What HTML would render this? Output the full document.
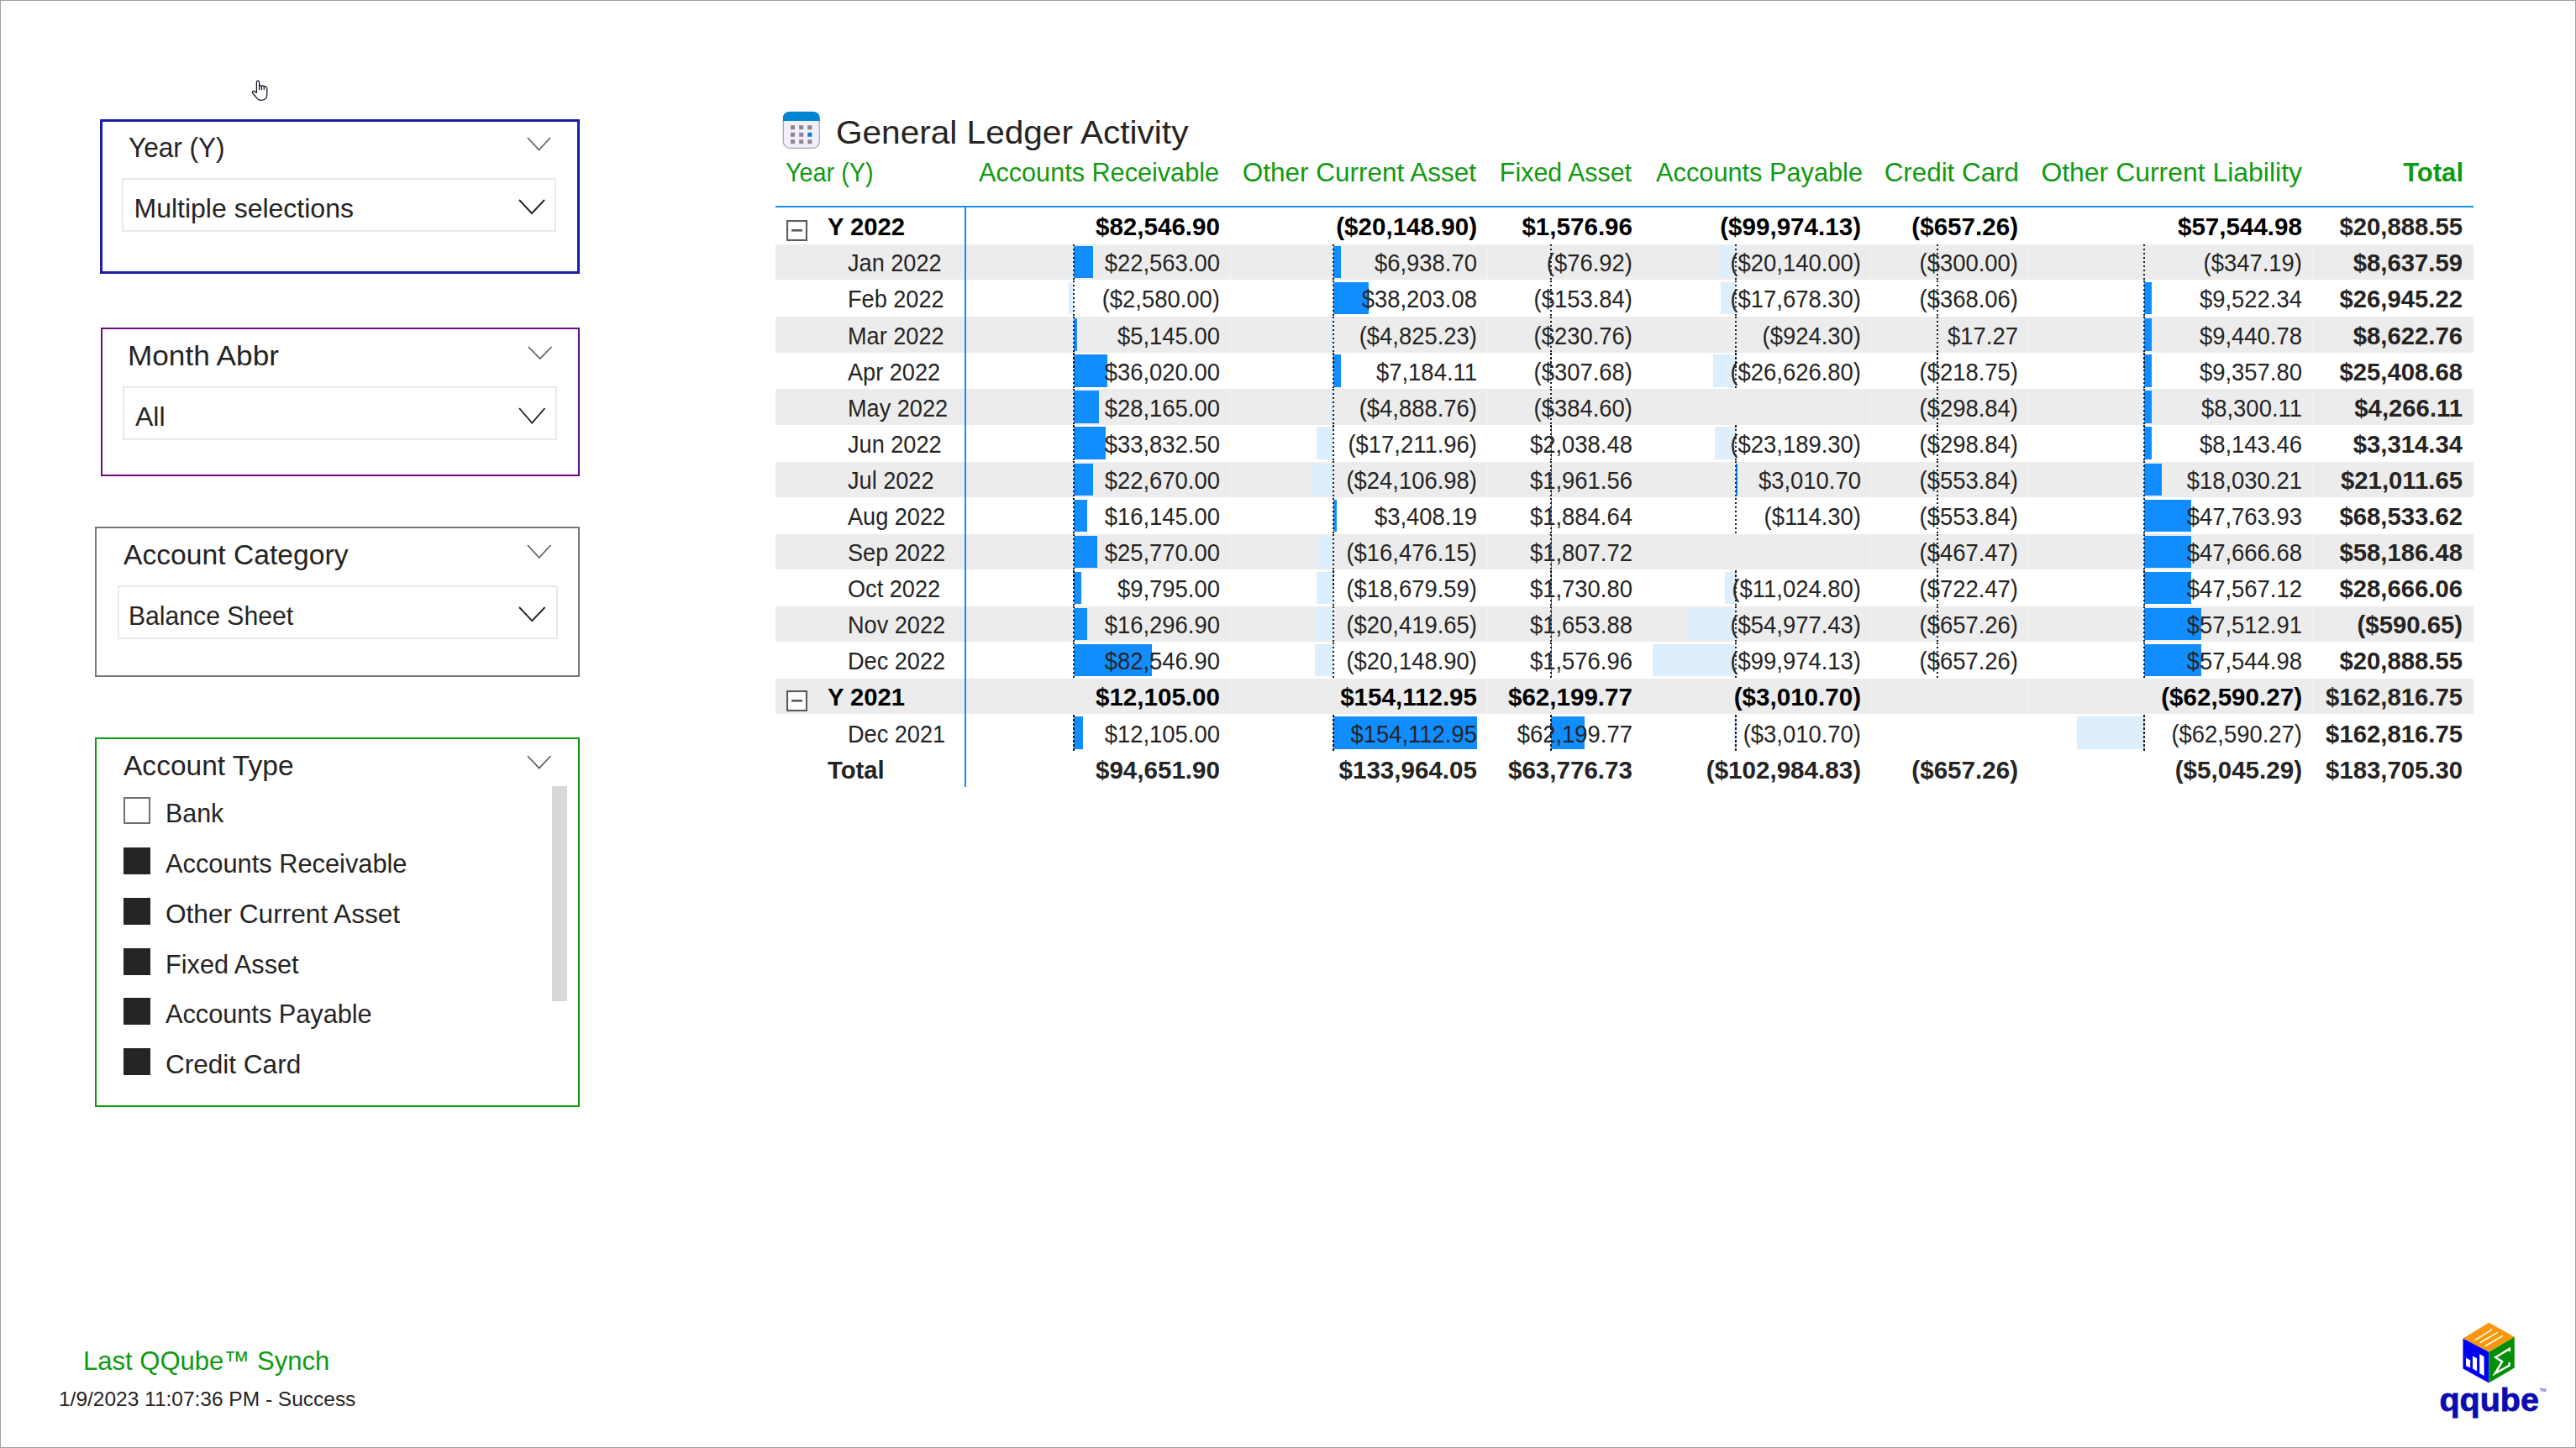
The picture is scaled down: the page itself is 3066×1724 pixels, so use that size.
<!DOCTYPE html>
<html><head><meta charset="utf-8"><style>
html,body{margin:0;padding:0;background:#fff;width:3066px;height:1724px;overflow:hidden}
body{position:relative;font-family:"Liberation Sans",sans-serif}
.t{position:absolute;white-space:pre}
.r{position:absolute}
.ax{width:2px;background:repeating-linear-gradient(to bottom,#1a1a1a 0,#1a1a1a 2.5px,transparent 2.5px,transparent 5px)}
</style></head><body>
<div class="r" style="left:0;top:0;width:3066px;height:1724px;box-sizing:border-box;border:1px solid #a0a0a0;border-right-width:1px;border-bottom-width:1px"></div>
<svg class="r" style="left:296px;top:95px" width="26" height="28" viewBox="0 0 26 28"><path d="M9.4 15.4 L9.4 2.8 Q9.4 1.2 11 1.2 Q12.6 1.2 12.6 2.8 L12.6 7.2 Q14 6.2 15.4 7.4 Q17 6.6 18.3 8 Q21.8 7.6 21.8 10.5 L21.8 18 Q21.5 24.4 14.4 24.4 Q11.5 24.4 9 21 L4.6 15.5 Q3.6 13.8 5.5 13.5 Q7 13.4 9.4 15.4 Z" fill="#fff" stroke="#141428" stroke-width="1.25" stroke-linejoin="round"/><path d="M12.6 7.2 L12.6 11.6 M15.4 7.4 L15.4 11.6 M18.3 8 L18.3 11.6" fill="none" stroke="#141428" stroke-width="1.25" stroke-linecap="round"/></svg>
<div class="r" style="left:119px;top:142px;width:571px;height:184px;box-sizing:border-box;border:3px solid #1a1ea6;"></div>
<div class="t" style="top:159.06px;font-size:33px;line-height:33px;color:#252423;left:153.00px;transform-origin:0 0;transform:scaleX(0.956);">Year (Y)</div>
<svg class="r" style="left:625px;top:161px" width="33" height="20.5"><polyline points="3,3 16.50,17.50 30.00,3" fill="none" stroke="#605e5c" stroke-width="1.7"/></svg>
<div class="r" style="left:145px;top:212px;width:517px;height:64px;box-sizing:border-box;border:2px solid #e9e9e9;"></div>
<div class="t" style="top:232.11px;font-size:32px;line-height:32px;color:#252423;left:159.50px;transform-origin:0 0;">Multiple selections</div>
<svg class="r" style="left:614.5px;top:235px" width="36.0" height="22"><polyline points="3,3 18.00,19.00 33.00,3" fill="none" stroke="#252423" stroke-width="1.9"/></svg>
<div class="r" style="left:120px;top:390px;width:570px;height:177px;box-sizing:border-box;border:2px solid #6b0a84;"></div>
<div class="t" style="top:407.26px;font-size:33px;line-height:33px;color:#252423;left:152.40px;transform-origin:0 0;transform:scaleX(1.066);">Month Abbr</div>
<svg class="r" style="left:626px;top:409.5px" width="33.5" height="20.0"><polyline points="3,3 16.75,17.00 30.50,3" fill="none" stroke="#605e5c" stroke-width="1.7"/></svg>
<div class="r" style="left:146px;top:459.5px;width:517px;height:64.5px;box-sizing:border-box;border:2px solid #e9e9e9;"></div>
<div class="t" style="top:479.71px;font-size:32px;line-height:32px;color:#252423;left:161.00px;transform-origin:0 0;">All</div>
<svg class="r" style="left:615px;top:482.5px" width="36.5" height="23.5"><polyline points="3,3 18.25,20.50 33.50,3" fill="none" stroke="#252423" stroke-width="1.9"/></svg>
<div class="r" style="left:113px;top:627px;width:577px;height:179px;box-sizing:border-box;border:2px solid #777777;"></div>
<div class="t" style="top:644.26px;font-size:33px;line-height:33px;color:#252423;left:147.00px;transform-origin:0 0;transform:scaleX(1.02);">Account Category</div>
<svg class="r" style="left:625px;top:646px" width="33.5" height="21"><polyline points="3,3 16.75,18.00 30.50,3" fill="none" stroke="#605e5c" stroke-width="1.7"/></svg>
<div class="r" style="left:139.5px;top:696.5px;width:524.5px;height:64.0px;box-sizing:border-box;border:2px solid #e9e9e9;"></div>
<div class="t" style="top:716.61px;font-size:32px;line-height:32px;color:#252423;left:153.00px;transform-origin:0 0;transform:scaleX(0.942);">Balance Sheet</div>
<svg class="r" style="left:615px;top:719.6px" width="36.60000000000002" height="22.100000000000023"><polyline points="3,3 18.30,19.10 33.60,3" fill="none" stroke="#252423" stroke-width="1.9"/></svg>
<div class="r" style="left:113px;top:878px;width:577px;height:440px;box-sizing:border-box;border:2px solid #0e9a0e;"></div>
<div class="t" style="top:894.86px;font-size:33px;line-height:33px;color:#252423;left:147.00px;transform-origin:0 0;transform:scaleX(1.016);">Account Type</div>
<svg class="r" style="left:625px;top:897px" width="33.5" height="20.700000000000045"><polyline points="3,3 16.75,17.70 30.50,3" fill="none" stroke="#605e5c" stroke-width="1.7"/></svg>
<div class="r" style="left:657.00px;top:936.00px;width:18.00px;height:256.00px;background:#d8d8d8;"></div>
<div class="r" style="left:147px;top:949px;width:32px;height:32px;box-sizing:border-box;border:2px solid #6f6f6f;background:#fff;"></div>
<div class="t" style="top:951.51px;font-size:32px;line-height:32px;color:#252423;left:197.20px;transform-origin:0 0;transform:scaleX(0.95);">Bank</div>
<div class="r" style="left:147.00px;top:1009.00px;width:32.00px;height:32.00px;background:#252423;"></div>
<div class="t" style="top:1011.51px;font-size:32px;line-height:32px;color:#252423;left:197.20px;transform-origin:0 0;transform:scaleX(0.962);">Accounts Receivable</div>
<div class="r" style="left:147.00px;top:1069.00px;width:32.00px;height:32.00px;background:#252423;"></div>
<div class="t" style="top:1071.51px;font-size:32px;line-height:32px;color:#252423;left:197.20px;transform-origin:0 0;transform:scaleX(0.987);">Other Current Asset</div>
<div class="r" style="left:147.00px;top:1129.00px;width:32.00px;height:32.00px;background:#252423;"></div>
<div class="t" style="top:1131.51px;font-size:32px;line-height:32px;color:#252423;left:197.20px;transform-origin:0 0;transform:scaleX(0.959);">Fixed Asset</div>
<div class="r" style="left:147.00px;top:1188.00px;width:32.00px;height:32.00px;background:#252423;"></div>
<div class="t" style="top:1190.51px;font-size:32px;line-height:32px;color:#252423;left:197.20px;transform-origin:0 0;transform:scaleX(0.959);">Accounts Payable</div>
<div class="r" style="left:147.00px;top:1248.00px;width:32.00px;height:32.00px;background:#252423;"></div>
<div class="t" style="top:1250.51px;font-size:32px;line-height:32px;color:#252423;left:197.20px;transform-origin:0 0;transform:scaleX(0.985);">Credit Card</div>
<div class="t" style="top:1603.91px;font-size:32px;line-height:32px;color:#119a11;left:99.00px;transform-origin:0 0;transform:scaleX(0.97);">Last QQube&trade; Synch</div>
<div class="t" style="top:1654.48px;font-size:24px;line-height:24px;color:#252423;left:70.00px;transform-origin:0 0;transform:scaleX(1.02);">1/9/2023 11:07:36 PM - Success</div>
<svg class="r" style="left:2890px;top:1565px" width="150" height="130" viewBox="2890 1565 150 130">
<polygon points="2962.3,1574.7 2992.8,1591.7 2962.3,1609.8 2931.5,1593.4" fill="#f7970c"/>
<polygon points="2931.5,1593.4 2962.3,1609.8 2962.3,1646.6 2931.5,1629.6" fill="#0000f0"/>
<polygon points="2962.3,1609.8 2992.8,1591.7 2992.8,1628.5 2962.3,1646.6" fill="#038f03"/>
<g stroke="#fff" stroke-width="1.5" stroke-linecap="round"><line x1="2945.8" y1="1595.7" x2="2965.7" y2="1583.2"/><line x1="2952.1" y1="1598.5" x2="2972.1" y2="1586.6"/><line x1="2958.3" y1="1602.5" x2="2978.7" y2="1590.4"/></g>
<g fill="#fff"><polygon points="2935,1616.6 2940.2,1619.5 2940.2,1628.5 2935,1626.3"/><polygon points="2943,1614.4 2948.1,1617.2 2948.1,1632.5 2943,1629.6"/><polygon points="2951.2,1612 2956.6,1615.2 2956.6,1638.1 2951.2,1635"/></g>
<path d="M2986.9,1609 L2986.9,1605.9 L2970.2,1616.1 L2978.1,1621.2 L2969.6,1635.3 L2986.6,1625.7 L2986.6,1622" fill="none" stroke="#fff" stroke-width="2.4" stroke-linejoin="miter"/>
<text x="2903.4" y="1680" font-family="Liberation Sans" font-weight="700" font-size="39" fill="#0c0cb0" stroke="#0c0cb0" stroke-width="0.8" textLength="118.6" lengthAdjust="spacingAndGlyphs">qqube</text>
<text x="3022.5" y="1656.8" font-family="Liberation Sans" font-size="5.5" fill="#0c0cb0">TM</text>
</svg>
<svg class="r" style="left:931px;top:132px" width="46" height="46" viewBox="931 132 46 46">
<rect x="932.3" y="133.4" width="43" height="43" rx="8" fill="#f3eff8" stroke="#a79fb0" stroke-width="1.2"/>
<path d="M932 144 L932 141 Q932 133 940 133 L967.6 133 Q975.6 133 975.6 141 L975.6 144 Z" fill="#0086d1"/>
<g fill="#8e8499"><rect x="941" y="149.2" width="5" height="5"/><rect x="951.2" y="149.2" width="5" height="5"/><rect x="961.3" y="149.2" width="5" height="5"/>
<rect x="941" y="157.8" width="5" height="5"/><rect x="951.2" y="157.8" width="5" height="5"/>
<rect x="941" y="166.2" width="5" height="5"/><rect x="951.2" y="166.2" width="5" height="5"/><rect x="961.3" y="166.2" width="5" height="5"/></g>
<rect x="961.3" y="157.8" width="5" height="5" fill="#0083d0"/>
</svg>
<div class="t" style="top:137.56px;font-size:39.5px;line-height:39.5px;color:#252423;left:994.50px;transform-origin:0 0;transform:scaleX(1.027);">General Ledger Activity</div>
<div class="t" style="top:188.91px;font-size:32px;line-height:32px;color:#119a11;left:934.50px;transform-origin:0 0;transform:scaleX(0.9);">Year (Y)</div>
<div class="t" style="top:188.91px;font-size:32px;line-height:32px;color:#119a11;left:-48.60px;width:1500px;text-align:right;transform-origin:100% 0;transform:scaleX(0.957);">Accounts Receivable</div>
<div class="t" style="top:188.91px;font-size:32px;line-height:32px;color:#119a11;left:257.40px;width:1500px;text-align:right;transform-origin:100% 0;transform:scaleX(0.984);">Other Current Asset</div>
<div class="t" style="top:188.91px;font-size:32px;line-height:32px;color:#119a11;left:442.00px;width:1500px;text-align:right;transform-origin:100% 0;transform:scaleX(0.95);">Fixed Asset</div>
<div class="t" style="top:188.91px;font-size:32px;line-height:32px;color:#119a11;left:717.00px;width:1500px;text-align:right;transform-origin:100% 0;transform:scaleX(0.96);">Accounts Payable</div>
<div class="t" style="top:188.91px;font-size:32px;line-height:32px;color:#119a11;left:903.40px;width:1500px;text-align:right;transform-origin:100% 0;transform:scaleX(0.98);">Credit Card</div>
<div class="t" style="top:188.91px;font-size:32px;line-height:32px;color:#119a11;left:1239.60px;width:1500px;text-align:right;transform-origin:100% 0;transform:scaleX(0.998);">Other Current Liability</div>
<div class="t" style="top:188.91px;font-size:32px;line-height:32px;color:#119a11;font-weight:700;left:1432.20px;width:1500px;text-align:right;transform-origin:100% 0;transform:scaleX(0.97);">Total</div>
<div class="r" style="left:922.80px;top:291.09px;width:2021.00px;height:42.30px;background:#ececec;"></div>
<div class="r" style="left:922.80px;top:377.27px;width:2021.00px;height:42.30px;background:#ececec;"></div>
<div class="r" style="left:922.80px;top:463.45px;width:2021.00px;height:42.30px;background:#ececec;"></div>
<div class="r" style="left:922.80px;top:549.63px;width:2021.00px;height:42.30px;background:#ececec;"></div>
<div class="r" style="left:922.80px;top:635.81px;width:2021.00px;height:42.30px;background:#ececec;"></div>
<div class="r" style="left:922.80px;top:721.99px;width:2021.00px;height:42.30px;background:#ececec;"></div>
<div class="r" style="left:922.80px;top:808.17px;width:2021.00px;height:42.30px;background:#ececec;"></div>
<div class="r" style="left:1463.90px;top:291.09px;width:1.00px;height:42.30px;background:#f3f3f3;"></div>
<div class="r" style="left:1463.90px;top:377.27px;width:1.00px;height:42.30px;background:#f3f3f3;"></div>
<div class="r" style="left:1463.90px;top:463.45px;width:1.00px;height:42.30px;background:#f3f3f3;"></div>
<div class="r" style="left:1463.90px;top:549.63px;width:1.00px;height:42.30px;background:#f3f3f3;"></div>
<div class="r" style="left:1463.90px;top:635.81px;width:1.00px;height:42.30px;background:#f3f3f3;"></div>
<div class="r" style="left:1463.90px;top:721.99px;width:1.00px;height:42.30px;background:#f3f3f3;"></div>
<div class="r" style="left:1463.90px;top:808.17px;width:1.00px;height:42.30px;background:#f3f3f3;"></div>
<div class="r" style="left:1769.80px;top:291.09px;width:1.00px;height:42.30px;background:#f3f3f3;"></div>
<div class="r" style="left:1769.80px;top:377.27px;width:1.00px;height:42.30px;background:#f3f3f3;"></div>
<div class="r" style="left:1769.80px;top:463.45px;width:1.00px;height:42.30px;background:#f3f3f3;"></div>
<div class="r" style="left:1769.80px;top:549.63px;width:1.00px;height:42.30px;background:#f3f3f3;"></div>
<div class="r" style="left:1769.80px;top:635.81px;width:1.00px;height:42.30px;background:#f3f3f3;"></div>
<div class="r" style="left:1769.80px;top:721.99px;width:1.00px;height:42.30px;background:#f3f3f3;"></div>
<div class="r" style="left:1769.80px;top:808.17px;width:1.00px;height:42.30px;background:#f3f3f3;"></div>
<div class="r" style="left:2226.10px;top:291.09px;width:1.00px;height:42.30px;background:#f3f3f3;"></div>
<div class="r" style="left:2226.10px;top:377.27px;width:1.00px;height:42.30px;background:#f3f3f3;"></div>
<div class="r" style="left:2226.10px;top:463.45px;width:1.00px;height:42.30px;background:#f3f3f3;"></div>
<div class="r" style="left:2226.10px;top:549.63px;width:1.00px;height:42.30px;background:#f3f3f3;"></div>
<div class="r" style="left:2226.10px;top:635.81px;width:1.00px;height:42.30px;background:#f3f3f3;"></div>
<div class="r" style="left:2226.10px;top:721.99px;width:1.00px;height:42.30px;background:#f3f3f3;"></div>
<div class="r" style="left:2226.10px;top:808.17px;width:1.00px;height:42.30px;background:#f3f3f3;"></div>
<div class="r" style="left:2414.00px;top:291.09px;width:1.00px;height:42.30px;background:#f3f3f3;"></div>
<div class="r" style="left:2414.00px;top:377.27px;width:1.00px;height:42.30px;background:#f3f3f3;"></div>
<div class="r" style="left:2414.00px;top:463.45px;width:1.00px;height:42.30px;background:#f3f3f3;"></div>
<div class="r" style="left:2414.00px;top:549.63px;width:1.00px;height:42.30px;background:#f3f3f3;"></div>
<div class="r" style="left:2414.00px;top:635.81px;width:1.00px;height:42.30px;background:#f3f3f3;"></div>
<div class="r" style="left:2414.00px;top:721.99px;width:1.00px;height:42.30px;background:#f3f3f3;"></div>
<div class="r" style="left:2414.00px;top:808.17px;width:1.00px;height:42.30px;background:#f3f3f3;"></div>
<div class="r" style="left:2751.80px;top:291.09px;width:1.00px;height:42.30px;background:#f3f3f3;"></div>
<div class="r" style="left:2751.80px;top:377.27px;width:1.00px;height:42.30px;background:#f3f3f3;"></div>
<div class="r" style="left:2751.80px;top:463.45px;width:1.00px;height:42.30px;background:#f3f3f3;"></div>
<div class="r" style="left:2751.80px;top:549.63px;width:1.00px;height:42.30px;background:#f3f3f3;"></div>
<div class="r" style="left:2751.80px;top:635.81px;width:1.00px;height:42.30px;background:#f3f3f3;"></div>
<div class="r" style="left:2751.80px;top:721.99px;width:1.00px;height:42.30px;background:#f3f3f3;"></div>
<div class="r" style="left:2751.80px;top:808.17px;width:1.00px;height:42.30px;background:#f3f3f3;"></div>
<div class="r" style="left:922.80px;top:245.00px;width:2021.00px;height:2.40px;background:#118dff;"></div>
<div class="r" style="left:1148.00px;top:247.00px;width:2.30px;height:689.50px;background:#118dff;"></div>
<div class="r" style="left:1278.00px;top:292.99px;width:23.10px;height:38.40px;background:#118dff;"></div>
<div class="r" style="left:1272.40px;top:336.08px;width:5.60px;height:38.40px;background:#ddeefd;"></div>
<div class="r" style="left:1278.00px;top:379.17px;width:4.00px;height:38.40px;background:#118dff;"></div>
<div class="r" style="left:1278.00px;top:422.26px;width:39.70px;height:38.40px;background:#118dff;"></div>
<div class="r" style="left:1278.00px;top:465.35px;width:30.40px;height:38.40px;background:#118dff;"></div>
<div class="r" style="left:1278.00px;top:508.44px;width:37.50px;height:38.40px;background:#118dff;"></div>
<div class="r" style="left:1278.00px;top:551.53px;width:23.20px;height:38.40px;background:#118dff;"></div>
<div class="r" style="left:1278.00px;top:594.62px;width:16.00px;height:38.40px;background:#118dff;"></div>
<div class="r" style="left:1278.00px;top:637.71px;width:27.90px;height:38.40px;background:#118dff;"></div>
<div class="r" style="left:1278.00px;top:680.80px;width:8.50px;height:38.40px;background:#118dff;"></div>
<div class="r" style="left:1278.00px;top:723.89px;width:16.00px;height:38.40px;background:#118dff;"></div>
<div class="r" style="left:1278.00px;top:766.98px;width:92.50px;height:38.40px;background:#118dff;"></div>
<div class="r" style="left:1278.00px;top:853.16px;width:11.30px;height:38.40px;background:#118dff;"></div>
<div class="r ax" style="left:1277.00px;top:290.89px;height:43.09px"></div>
<div class="r ax" style="left:1277.00px;top:333.98px;height:43.09px"></div>
<div class="r ax" style="left:1277.00px;top:377.07px;height:43.09px"></div>
<div class="r ax" style="left:1277.00px;top:420.16px;height:43.09px"></div>
<div class="r ax" style="left:1277.00px;top:463.25px;height:43.09px"></div>
<div class="r ax" style="left:1277.00px;top:506.34px;height:43.09px"></div>
<div class="r ax" style="left:1277.00px;top:549.43px;height:43.09px"></div>
<div class="r ax" style="left:1277.00px;top:592.52px;height:43.09px"></div>
<div class="r ax" style="left:1277.00px;top:635.61px;height:43.09px"></div>
<div class="r ax" style="left:1277.00px;top:678.70px;height:43.09px"></div>
<div class="r ax" style="left:1277.00px;top:721.79px;height:43.09px"></div>
<div class="r ax" style="left:1277.00px;top:764.88px;height:43.09px"></div>
<div class="r ax" style="left:1277.00px;top:851.06px;height:43.09px"></div>
<div class="r" style="left:1587.00px;top:292.99px;width:8.90px;height:38.40px;background:#118dff;"></div>
<div class="r" style="left:1587.00px;top:336.08px;width:42.00px;height:38.40px;background:#118dff;"></div>
<div class="r" style="left:1581.50px;top:379.17px;width:5.50px;height:38.40px;background:#ddeefd;"></div>
<div class="r" style="left:1587.00px;top:422.26px;width:8.90px;height:38.40px;background:#118dff;"></div>
<div class="r" style="left:1581.50px;top:465.35px;width:5.50px;height:38.40px;background:#ddeefd;"></div>
<div class="r" style="left:1567.20px;top:508.44px;width:19.80px;height:38.40px;background:#ddeefd;"></div>
<div class="r" style="left:1560.00px;top:551.53px;width:27.00px;height:38.40px;background:#ddeefd;"></div>
<div class="r" style="left:1587.00px;top:594.62px;width:3.70px;height:38.40px;background:#118dff;"></div>
<div class="r" style="left:1569.10px;top:637.71px;width:17.90px;height:38.40px;background:#ddeefd;"></div>
<div class="r" style="left:1566.90px;top:680.80px;width:20.10px;height:38.40px;background:#ddeefd;"></div>
<div class="r" style="left:1565.00px;top:723.89px;width:22.00px;height:38.40px;background:#ddeefd;"></div>
<div class="r" style="left:1565.00px;top:766.98px;width:22.00px;height:38.40px;background:#ddeefd;"></div>
<div class="r" style="left:1587.00px;top:853.16px;width:171.40px;height:38.40px;background:#118dff;"></div>
<div class="r ax" style="left:1586.00px;top:290.89px;height:43.09px"></div>
<div class="r ax" style="left:1586.00px;top:333.98px;height:43.09px"></div>
<div class="r ax" style="left:1586.00px;top:377.07px;height:43.09px"></div>
<div class="r ax" style="left:1586.00px;top:420.16px;height:43.09px"></div>
<div class="r ax" style="left:1586.00px;top:463.25px;height:43.09px"></div>
<div class="r ax" style="left:1586.00px;top:506.34px;height:43.09px"></div>
<div class="r ax" style="left:1586.00px;top:549.43px;height:43.09px"></div>
<div class="r ax" style="left:1586.00px;top:592.52px;height:43.09px"></div>
<div class="r ax" style="left:1586.00px;top:635.61px;height:43.09px"></div>
<div class="r ax" style="left:1586.00px;top:678.70px;height:43.09px"></div>
<div class="r ax" style="left:1586.00px;top:721.79px;height:43.09px"></div>
<div class="r ax" style="left:1586.00px;top:764.88px;height:43.09px"></div>
<div class="r ax" style="left:1586.00px;top:851.06px;height:43.09px"></div>
<div class="r" style="left:1845.50px;top:508.44px;width:1.30px;height:38.40px;background:#118dff;"></div>
<div class="r" style="left:1845.50px;top:551.53px;width:1.30px;height:38.40px;background:#118dff;"></div>
<div class="r" style="left:1845.50px;top:594.62px;width:1.30px;height:38.40px;background:#118dff;"></div>
<div class="r" style="left:1845.50px;top:637.71px;width:1.30px;height:38.40px;background:#118dff;"></div>
<div class="r" style="left:1845.50px;top:680.80px;width:1.30px;height:38.40px;background:#118dff;"></div>
<div class="r" style="left:1845.50px;top:723.89px;width:1.30px;height:38.40px;background:#118dff;"></div>
<div class="r" style="left:1845.50px;top:766.98px;width:1.30px;height:38.40px;background:#118dff;"></div>
<div class="r" style="left:1845.50px;top:853.16px;width:40.20px;height:38.40px;background:#118dff;"></div>
<div class="r ax" style="left:1844.50px;top:290.89px;height:43.09px"></div>
<div class="r ax" style="left:1844.50px;top:333.98px;height:43.09px"></div>
<div class="r ax" style="left:1844.50px;top:377.07px;height:43.09px"></div>
<div class="r ax" style="left:1844.50px;top:420.16px;height:43.09px"></div>
<div class="r ax" style="left:1844.50px;top:463.25px;height:43.09px"></div>
<div class="r ax" style="left:1844.50px;top:506.34px;height:43.09px"></div>
<div class="r ax" style="left:1844.50px;top:549.43px;height:43.09px"></div>
<div class="r ax" style="left:1844.50px;top:592.52px;height:43.09px"></div>
<div class="r ax" style="left:1844.50px;top:635.61px;height:43.09px"></div>
<div class="r ax" style="left:1844.50px;top:678.70px;height:43.09px"></div>
<div class="r ax" style="left:1844.50px;top:721.79px;height:43.09px"></div>
<div class="r ax" style="left:1844.50px;top:764.88px;height:43.09px"></div>
<div class="r ax" style="left:1844.50px;top:851.06px;height:43.09px"></div>
<div class="r" style="left:2046.10px;top:292.99px;width:19.90px;height:38.40px;background:#ddeefd;"></div>
<div class="r" style="left:2048.30px;top:336.08px;width:17.70px;height:38.40px;background:#ddeefd;"></div>
<div class="r" style="left:2039.10px;top:422.26px;width:26.90px;height:38.40px;background:#ddeefd;"></div>
<div class="r" style="left:2041.00px;top:508.44px;width:25.00px;height:38.40px;background:#ddeefd;"></div>
<div class="r" style="left:2066.00px;top:551.53px;width:1.60px;height:38.40px;background:#118dff;"></div>
<div class="r" style="left:2053.00px;top:680.80px;width:13.00px;height:38.40px;background:#ddeefd;"></div>
<div class="r" style="left:2009.90px;top:723.89px;width:56.10px;height:38.40px;background:#ddeefd;"></div>
<div class="r" style="left:1967.10px;top:766.98px;width:98.90px;height:38.40px;background:#ddeefd;"></div>
<div class="r" style="left:2063.80px;top:853.16px;width:2.20px;height:38.40px;background:#ddeefd;"></div>
<div class="r ax" style="left:2065.00px;top:290.89px;height:43.09px"></div>
<div class="r ax" style="left:2065.00px;top:333.98px;height:43.09px"></div>
<div class="r ax" style="left:2065.00px;top:377.07px;height:43.09px"></div>
<div class="r ax" style="left:2065.00px;top:420.16px;height:43.09px"></div>
<div class="r ax" style="left:2065.00px;top:506.34px;height:43.09px"></div>
<div class="r ax" style="left:2065.00px;top:549.43px;height:43.09px"></div>
<div class="r ax" style="left:2065.00px;top:592.52px;height:43.09px"></div>
<div class="r ax" style="left:2065.00px;top:678.70px;height:43.09px"></div>
<div class="r ax" style="left:2065.00px;top:721.79px;height:43.09px"></div>
<div class="r ax" style="left:2065.00px;top:764.88px;height:43.09px"></div>
<div class="r ax" style="left:2065.00px;top:851.06px;height:43.09px"></div>
<div class="r ax" style="left:2304.50px;top:290.89px;height:43.09px"></div>
<div class="r ax" style="left:2304.50px;top:333.98px;height:43.09px"></div>
<div class="r ax" style="left:2304.50px;top:377.07px;height:43.09px"></div>
<div class="r ax" style="left:2304.50px;top:420.16px;height:43.09px"></div>
<div class="r ax" style="left:2304.50px;top:463.25px;height:43.09px"></div>
<div class="r ax" style="left:2304.50px;top:506.34px;height:43.09px"></div>
<div class="r ax" style="left:2304.50px;top:549.43px;height:43.09px"></div>
<div class="r ax" style="left:2304.50px;top:592.52px;height:43.09px"></div>
<div class="r ax" style="left:2304.50px;top:635.61px;height:43.09px"></div>
<div class="r ax" style="left:2304.50px;top:678.70px;height:43.09px"></div>
<div class="r ax" style="left:2304.50px;top:721.79px;height:43.09px"></div>
<div class="r ax" style="left:2304.50px;top:764.88px;height:43.09px"></div>
<div class="r" style="left:2552.20px;top:336.08px;width:8.70px;height:38.40px;background:#118dff;"></div>
<div class="r" style="left:2552.20px;top:379.17px;width:8.70px;height:38.40px;background:#118dff;"></div>
<div class="r" style="left:2552.20px;top:422.26px;width:8.70px;height:38.40px;background:#118dff;"></div>
<div class="r" style="left:2552.20px;top:465.35px;width:8.70px;height:38.40px;background:#118dff;"></div>
<div class="r" style="left:2552.20px;top:508.44px;width:8.70px;height:38.40px;background:#118dff;"></div>
<div class="r" style="left:2552.20px;top:551.53px;width:20.80px;height:38.40px;background:#118dff;"></div>
<div class="r" style="left:2552.20px;top:594.62px;width:56.10px;height:38.40px;background:#118dff;"></div>
<div class="r" style="left:2552.20px;top:637.71px;width:56.10px;height:38.40px;background:#118dff;"></div>
<div class="r" style="left:2552.20px;top:680.80px;width:56.10px;height:38.40px;background:#118dff;"></div>
<div class="r" style="left:2552.20px;top:723.89px;width:68.30px;height:38.40px;background:#118dff;"></div>
<div class="r" style="left:2552.20px;top:766.98px;width:68.30px;height:38.40px;background:#118dff;"></div>
<div class="r" style="left:2472.20px;top:853.16px;width:80.00px;height:38.40px;background:#ddeefd;"></div>
<div class="r ax" style="left:2551.20px;top:290.89px;height:43.09px"></div>
<div class="r ax" style="left:2551.20px;top:333.98px;height:43.09px"></div>
<div class="r ax" style="left:2551.20px;top:377.07px;height:43.09px"></div>
<div class="r ax" style="left:2551.20px;top:420.16px;height:43.09px"></div>
<div class="r ax" style="left:2551.20px;top:463.25px;height:43.09px"></div>
<div class="r ax" style="left:2551.20px;top:506.34px;height:43.09px"></div>
<div class="r ax" style="left:2551.20px;top:549.43px;height:43.09px"></div>
<div class="r ax" style="left:2551.20px;top:592.52px;height:43.09px"></div>
<div class="r ax" style="left:2551.20px;top:635.61px;height:43.09px"></div>
<div class="r ax" style="left:2551.20px;top:678.70px;height:43.09px"></div>
<div class="r ax" style="left:2551.20px;top:721.79px;height:43.09px"></div>
<div class="r ax" style="left:2551.20px;top:764.88px;height:43.09px"></div>
<div class="r ax" style="left:2551.20px;top:851.06px;height:43.09px"></div>
<svg class="r" style="left:936px;top:262.30px" width="25" height="25"><rect x="1" y="1" width="23" height="23" fill="#fff" stroke="#5a5a5a" stroke-width="2.2"/><rect x="6" y="11" width="13" height="2.6" fill="#5a5a5a"/></svg>
<div class="t" style="top:256.25px;font-size:29px;line-height:29px;color:#000;font-weight:700;left:984.50px;transform-origin:0 0;transform:scaleX(1.007);">Y 2022</div>
<div class="t" style="top:256.25px;font-size:29px;line-height:29px;color:#000;font-weight:700;left:-48.00px;width:1500px;text-align:right;transform-origin:100% 0;transform:scaleX(1.02);">$82,546.90</div>
<div class="t" style="top:256.25px;font-size:29px;line-height:29px;color:#000;font-weight:700;left:257.90px;width:1500px;text-align:right;transform-origin:100% 0;transform:scaleX(1.02);">($20,148.90)</div>
<div class="t" style="top:256.25px;font-size:29px;line-height:29px;color:#000;font-weight:700;left:442.50px;width:1500px;text-align:right;transform-origin:100% 0;transform:scaleX(1.02);">$1,576.96</div>
<div class="t" style="top:256.25px;font-size:29px;line-height:29px;color:#000;font-weight:700;left:714.90px;width:1500px;text-align:right;transform-origin:100% 0;transform:scaleX(1.02);">($99,974.13)</div>
<div class="t" style="top:256.25px;font-size:29px;line-height:29px;color:#000;font-weight:700;left:901.70px;width:1500px;text-align:right;transform-origin:100% 0;transform:scaleX(1.02);">($657.26)</div>
<div class="t" style="top:256.25px;font-size:29px;line-height:29px;color:#000;font-weight:700;left:1240.10px;width:1500px;text-align:right;transform-origin:100% 0;transform:scaleX(1.02);">$57,544.98</div>
<div class="t" style="top:256.25px;font-size:29px;line-height:29px;color:#252423;font-weight:700;left:1431.00px;width:1500px;text-align:right;transform-origin:100% 0;transform:scaleX(1.01);">$20,888.55</div>
<div class="t" style="top:299.34px;font-size:29px;line-height:29px;color:#252423;left:1009.00px;transform-origin:0 0;transform:scaleX(0.935);">Jan 2022</div>
<div class="t" style="top:299.34px;font-size:29px;line-height:29px;color:#252423;left:-48.00px;width:1500px;text-align:right;transform-origin:100% 0;transform:scaleX(0.946);">$22,563.00</div>
<div class="t" style="top:299.34px;font-size:29px;line-height:29px;color:#252423;left:257.90px;width:1500px;text-align:right;transform-origin:100% 0;transform:scaleX(0.946);">$6,938.70</div>
<div class="t" style="top:299.34px;font-size:29px;line-height:29px;color:#252423;left:442.50px;width:1500px;text-align:right;transform-origin:100% 0;transform:scaleX(0.946);">($76.92)</div>
<div class="t" style="top:299.34px;font-size:29px;line-height:29px;color:#252423;left:714.90px;width:1500px;text-align:right;transform-origin:100% 0;transform:scaleX(0.946);">($20,140.00)</div>
<div class="t" style="top:299.34px;font-size:29px;line-height:29px;color:#252423;left:901.70px;width:1500px;text-align:right;transform-origin:100% 0;transform:scaleX(0.946);">($300.00)</div>
<div class="t" style="top:299.34px;font-size:29px;line-height:29px;color:#252423;left:1240.10px;width:1500px;text-align:right;transform-origin:100% 0;transform:scaleX(0.946);">($347.19)</div>
<div class="t" style="top:299.34px;font-size:29px;line-height:29px;color:#252423;font-weight:700;left:1431.00px;width:1500px;text-align:right;transform-origin:100% 0;transform:scaleX(1.01);">$8,637.59</div>
<div class="t" style="top:342.43px;font-size:29px;line-height:29px;color:#252423;left:1009.00px;transform-origin:0 0;transform:scaleX(0.935);">Feb 2022</div>
<div class="t" style="top:342.43px;font-size:29px;line-height:29px;color:#252423;left:-48.00px;width:1500px;text-align:right;transform-origin:100% 0;transform:scaleX(0.946);">($2,580.00)</div>
<div class="t" style="top:342.43px;font-size:29px;line-height:29px;color:#252423;left:257.90px;width:1500px;text-align:right;transform-origin:100% 0;transform:scaleX(0.946);">$38,203.08</div>
<div class="t" style="top:342.43px;font-size:29px;line-height:29px;color:#252423;left:442.50px;width:1500px;text-align:right;transform-origin:100% 0;transform:scaleX(0.946);">($153.84)</div>
<div class="t" style="top:342.43px;font-size:29px;line-height:29px;color:#252423;left:714.90px;width:1500px;text-align:right;transform-origin:100% 0;transform:scaleX(0.946);">($17,678.30)</div>
<div class="t" style="top:342.43px;font-size:29px;line-height:29px;color:#252423;left:901.70px;width:1500px;text-align:right;transform-origin:100% 0;transform:scaleX(0.946);">($368.06)</div>
<div class="t" style="top:342.43px;font-size:29px;line-height:29px;color:#252423;left:1240.10px;width:1500px;text-align:right;transform-origin:100% 0;transform:scaleX(0.946);">$9,522.34</div>
<div class="t" style="top:342.43px;font-size:29px;line-height:29px;color:#252423;font-weight:700;left:1431.00px;width:1500px;text-align:right;transform-origin:100% 0;transform:scaleX(1.01);">$26,945.22</div>
<div class="t" style="top:385.52px;font-size:29px;line-height:29px;color:#252423;left:1009.00px;transform-origin:0 0;transform:scaleX(0.935);">Mar 2022</div>
<div class="t" style="top:385.52px;font-size:29px;line-height:29px;color:#252423;left:-48.00px;width:1500px;text-align:right;transform-origin:100% 0;transform:scaleX(0.946);">$5,145.00</div>
<div class="t" style="top:385.52px;font-size:29px;line-height:29px;color:#252423;left:257.90px;width:1500px;text-align:right;transform-origin:100% 0;transform:scaleX(0.946);">($4,825.23)</div>
<div class="t" style="top:385.52px;font-size:29px;line-height:29px;color:#252423;left:442.50px;width:1500px;text-align:right;transform-origin:100% 0;transform:scaleX(0.946);">($230.76)</div>
<div class="t" style="top:385.52px;font-size:29px;line-height:29px;color:#252423;left:714.90px;width:1500px;text-align:right;transform-origin:100% 0;transform:scaleX(0.946);">($924.30)</div>
<div class="t" style="top:385.52px;font-size:29px;line-height:29px;color:#252423;left:901.70px;width:1500px;text-align:right;transform-origin:100% 0;transform:scaleX(0.946);">$17.27</div>
<div class="t" style="top:385.52px;font-size:29px;line-height:29px;color:#252423;left:1240.10px;width:1500px;text-align:right;transform-origin:100% 0;transform:scaleX(0.946);">$9,440.78</div>
<div class="t" style="top:385.52px;font-size:29px;line-height:29px;color:#252423;font-weight:700;left:1431.00px;width:1500px;text-align:right;transform-origin:100% 0;transform:scaleX(1.01);">$8,622.76</div>
<div class="t" style="top:428.61px;font-size:29px;line-height:29px;color:#252423;left:1009.00px;transform-origin:0 0;transform:scaleX(0.935);">Apr 2022</div>
<div class="t" style="top:428.61px;font-size:29px;line-height:29px;color:#252423;left:-48.00px;width:1500px;text-align:right;transform-origin:100% 0;transform:scaleX(0.946);">$36,020.00</div>
<div class="t" style="top:428.61px;font-size:29px;line-height:29px;color:#252423;left:257.90px;width:1500px;text-align:right;transform-origin:100% 0;transform:scaleX(0.946);">$7,184.11</div>
<div class="t" style="top:428.61px;font-size:29px;line-height:29px;color:#252423;left:442.50px;width:1500px;text-align:right;transform-origin:100% 0;transform:scaleX(0.946);">($307.68)</div>
<div class="t" style="top:428.61px;font-size:29px;line-height:29px;color:#252423;left:714.90px;width:1500px;text-align:right;transform-origin:100% 0;transform:scaleX(0.946);">($26,626.80)</div>
<div class="t" style="top:428.61px;font-size:29px;line-height:29px;color:#252423;left:901.70px;width:1500px;text-align:right;transform-origin:100% 0;transform:scaleX(0.946);">($218.75)</div>
<div class="t" style="top:428.61px;font-size:29px;line-height:29px;color:#252423;left:1240.10px;width:1500px;text-align:right;transform-origin:100% 0;transform:scaleX(0.946);">$9,357.80</div>
<div class="t" style="top:428.61px;font-size:29px;line-height:29px;color:#252423;font-weight:700;left:1431.00px;width:1500px;text-align:right;transform-origin:100% 0;transform:scaleX(1.01);">$25,408.68</div>
<div class="t" style="top:471.70px;font-size:29px;line-height:29px;color:#252423;left:1009.00px;transform-origin:0 0;transform:scaleX(0.935);">May 2022</div>
<div class="t" style="top:471.70px;font-size:29px;line-height:29px;color:#252423;left:-48.00px;width:1500px;text-align:right;transform-origin:100% 0;transform:scaleX(0.946);">$28,165.00</div>
<div class="t" style="top:471.70px;font-size:29px;line-height:29px;color:#252423;left:257.90px;width:1500px;text-align:right;transform-origin:100% 0;transform:scaleX(0.946);">($4,888.76)</div>
<div class="t" style="top:471.70px;font-size:29px;line-height:29px;color:#252423;left:442.50px;width:1500px;text-align:right;transform-origin:100% 0;transform:scaleX(0.946);">($384.60)</div>
<div class="t" style="top:471.70px;font-size:29px;line-height:29px;color:#252423;left:901.70px;width:1500px;text-align:right;transform-origin:100% 0;transform:scaleX(0.946);">($298.84)</div>
<div class="t" style="top:471.70px;font-size:29px;line-height:29px;color:#252423;left:1240.10px;width:1500px;text-align:right;transform-origin:100% 0;transform:scaleX(0.946);">$8,300.11</div>
<div class="t" style="top:471.70px;font-size:29px;line-height:29px;color:#252423;font-weight:700;left:1431.00px;width:1500px;text-align:right;transform-origin:100% 0;transform:scaleX(1.01);">$4,266.11</div>
<div class="t" style="top:514.79px;font-size:29px;line-height:29px;color:#252423;left:1009.00px;transform-origin:0 0;transform:scaleX(0.935);">Jun 2022</div>
<div class="t" style="top:514.79px;font-size:29px;line-height:29px;color:#252423;left:-48.00px;width:1500px;text-align:right;transform-origin:100% 0;transform:scaleX(0.946);">$33,832.50</div>
<div class="t" style="top:514.79px;font-size:29px;line-height:29px;color:#252423;left:257.90px;width:1500px;text-align:right;transform-origin:100% 0;transform:scaleX(0.946);">($17,211.96)</div>
<div class="t" style="top:514.79px;font-size:29px;line-height:29px;color:#252423;left:442.50px;width:1500px;text-align:right;transform-origin:100% 0;transform:scaleX(0.946);">$2,038.48</div>
<div class="t" style="top:514.79px;font-size:29px;line-height:29px;color:#252423;left:714.90px;width:1500px;text-align:right;transform-origin:100% 0;transform:scaleX(0.946);">($23,189.30)</div>
<div class="t" style="top:514.79px;font-size:29px;line-height:29px;color:#252423;left:901.70px;width:1500px;text-align:right;transform-origin:100% 0;transform:scaleX(0.946);">($298.84)</div>
<div class="t" style="top:514.79px;font-size:29px;line-height:29px;color:#252423;left:1240.10px;width:1500px;text-align:right;transform-origin:100% 0;transform:scaleX(0.946);">$8,143.46</div>
<div class="t" style="top:514.79px;font-size:29px;line-height:29px;color:#252423;font-weight:700;left:1431.00px;width:1500px;text-align:right;transform-origin:100% 0;transform:scaleX(1.01);">$3,314.34</div>
<div class="t" style="top:557.88px;font-size:29px;line-height:29px;color:#252423;left:1009.00px;transform-origin:0 0;transform:scaleX(0.935);">Jul 2022</div>
<div class="t" style="top:557.88px;font-size:29px;line-height:29px;color:#252423;left:-48.00px;width:1500px;text-align:right;transform-origin:100% 0;transform:scaleX(0.946);">$22,670.00</div>
<div class="t" style="top:557.88px;font-size:29px;line-height:29px;color:#252423;left:257.90px;width:1500px;text-align:right;transform-origin:100% 0;transform:scaleX(0.946);">($24,106.98)</div>
<div class="t" style="top:557.88px;font-size:29px;line-height:29px;color:#252423;left:442.50px;width:1500px;text-align:right;transform-origin:100% 0;transform:scaleX(0.946);">$1,961.56</div>
<div class="t" style="top:557.88px;font-size:29px;line-height:29px;color:#252423;left:714.90px;width:1500px;text-align:right;transform-origin:100% 0;transform:scaleX(0.946);">$3,010.70</div>
<div class="t" style="top:557.88px;font-size:29px;line-height:29px;color:#252423;left:901.70px;width:1500px;text-align:right;transform-origin:100% 0;transform:scaleX(0.946);">($553.84)</div>
<div class="t" style="top:557.88px;font-size:29px;line-height:29px;color:#252423;left:1240.10px;width:1500px;text-align:right;transform-origin:100% 0;transform:scaleX(0.946);">$18,030.21</div>
<div class="t" style="top:557.88px;font-size:29px;line-height:29px;color:#252423;font-weight:700;left:1431.00px;width:1500px;text-align:right;transform-origin:100% 0;transform:scaleX(1.01);">$21,011.65</div>
<div class="t" style="top:600.97px;font-size:29px;line-height:29px;color:#252423;left:1009.00px;transform-origin:0 0;transform:scaleX(0.935);">Aug 2022</div>
<div class="t" style="top:600.97px;font-size:29px;line-height:29px;color:#252423;left:-48.00px;width:1500px;text-align:right;transform-origin:100% 0;transform:scaleX(0.946);">$16,145.00</div>
<div class="t" style="top:600.97px;font-size:29px;line-height:29px;color:#252423;left:257.90px;width:1500px;text-align:right;transform-origin:100% 0;transform:scaleX(0.946);">$3,408.19</div>
<div class="t" style="top:600.97px;font-size:29px;line-height:29px;color:#252423;left:442.50px;width:1500px;text-align:right;transform-origin:100% 0;transform:scaleX(0.946);">$1,884.64</div>
<div class="t" style="top:600.97px;font-size:29px;line-height:29px;color:#252423;left:714.90px;width:1500px;text-align:right;transform-origin:100% 0;transform:scaleX(0.946);">($114.30)</div>
<div class="t" style="top:600.97px;font-size:29px;line-height:29px;color:#252423;left:901.70px;width:1500px;text-align:right;transform-origin:100% 0;transform:scaleX(0.946);">($553.84)</div>
<div class="t" style="top:600.97px;font-size:29px;line-height:29px;color:#252423;left:1240.10px;width:1500px;text-align:right;transform-origin:100% 0;transform:scaleX(0.946);">$47,763.93</div>
<div class="t" style="top:600.97px;font-size:29px;line-height:29px;color:#252423;font-weight:700;left:1431.00px;width:1500px;text-align:right;transform-origin:100% 0;transform:scaleX(1.01);">$68,533.62</div>
<div class="t" style="top:644.06px;font-size:29px;line-height:29px;color:#252423;left:1009.00px;transform-origin:0 0;transform:scaleX(0.935);">Sep 2022</div>
<div class="t" style="top:644.06px;font-size:29px;line-height:29px;color:#252423;left:-48.00px;width:1500px;text-align:right;transform-origin:100% 0;transform:scaleX(0.946);">$25,770.00</div>
<div class="t" style="top:644.06px;font-size:29px;line-height:29px;color:#252423;left:257.90px;width:1500px;text-align:right;transform-origin:100% 0;transform:scaleX(0.946);">($16,476.15)</div>
<div class="t" style="top:644.06px;font-size:29px;line-height:29px;color:#252423;left:442.50px;width:1500px;text-align:right;transform-origin:100% 0;transform:scaleX(0.946);">$1,807.72</div>
<div class="t" style="top:644.06px;font-size:29px;line-height:29px;color:#252423;left:901.70px;width:1500px;text-align:right;transform-origin:100% 0;transform:scaleX(0.946);">($467.47)</div>
<div class="t" style="top:644.06px;font-size:29px;line-height:29px;color:#252423;left:1240.10px;width:1500px;text-align:right;transform-origin:100% 0;transform:scaleX(0.946);">$47,666.68</div>
<div class="t" style="top:644.06px;font-size:29px;line-height:29px;color:#252423;font-weight:700;left:1431.00px;width:1500px;text-align:right;transform-origin:100% 0;transform:scaleX(1.01);">$58,186.48</div>
<div class="t" style="top:687.15px;font-size:29px;line-height:29px;color:#252423;left:1009.00px;transform-origin:0 0;transform:scaleX(0.935);">Oct 2022</div>
<div class="t" style="top:687.15px;font-size:29px;line-height:29px;color:#252423;left:-48.00px;width:1500px;text-align:right;transform-origin:100% 0;transform:scaleX(0.946);">$9,795.00</div>
<div class="t" style="top:687.15px;font-size:29px;line-height:29px;color:#252423;left:257.90px;width:1500px;text-align:right;transform-origin:100% 0;transform:scaleX(0.946);">($18,679.59)</div>
<div class="t" style="top:687.15px;font-size:29px;line-height:29px;color:#252423;left:442.50px;width:1500px;text-align:right;transform-origin:100% 0;transform:scaleX(0.946);">$1,730.80</div>
<div class="t" style="top:687.15px;font-size:29px;line-height:29px;color:#252423;left:714.90px;width:1500px;text-align:right;transform-origin:100% 0;transform:scaleX(0.946);">($11,024.80)</div>
<div class="t" style="top:687.15px;font-size:29px;line-height:29px;color:#252423;left:901.70px;width:1500px;text-align:right;transform-origin:100% 0;transform:scaleX(0.946);">($722.47)</div>
<div class="t" style="top:687.15px;font-size:29px;line-height:29px;color:#252423;left:1240.10px;width:1500px;text-align:right;transform-origin:100% 0;transform:scaleX(0.946);">$47,567.12</div>
<div class="t" style="top:687.15px;font-size:29px;line-height:29px;color:#252423;font-weight:700;left:1431.00px;width:1500px;text-align:right;transform-origin:100% 0;transform:scaleX(1.01);">$28,666.06</div>
<div class="t" style="top:730.24px;font-size:29px;line-height:29px;color:#252423;left:1009.00px;transform-origin:0 0;transform:scaleX(0.935);">Nov 2022</div>
<div class="t" style="top:730.24px;font-size:29px;line-height:29px;color:#252423;left:-48.00px;width:1500px;text-align:right;transform-origin:100% 0;transform:scaleX(0.946);">$16,296.90</div>
<div class="t" style="top:730.24px;font-size:29px;line-height:29px;color:#252423;left:257.90px;width:1500px;text-align:right;transform-origin:100% 0;transform:scaleX(0.946);">($20,419.65)</div>
<div class="t" style="top:730.24px;font-size:29px;line-height:29px;color:#252423;left:442.50px;width:1500px;text-align:right;transform-origin:100% 0;transform:scaleX(0.946);">$1,653.88</div>
<div class="t" style="top:730.24px;font-size:29px;line-height:29px;color:#252423;left:714.90px;width:1500px;text-align:right;transform-origin:100% 0;transform:scaleX(0.946);">($54,977.43)</div>
<div class="t" style="top:730.24px;font-size:29px;line-height:29px;color:#252423;left:901.70px;width:1500px;text-align:right;transform-origin:100% 0;transform:scaleX(0.946);">($657.26)</div>
<div class="t" style="top:730.24px;font-size:29px;line-height:29px;color:#252423;left:1240.10px;width:1500px;text-align:right;transform-origin:100% 0;transform:scaleX(0.946);">$57,512.91</div>
<div class="t" style="top:730.24px;font-size:29px;line-height:29px;color:#252423;font-weight:700;left:1431.00px;width:1500px;text-align:right;transform-origin:100% 0;transform:scaleX(1.01);">($590.65)</div>
<div class="t" style="top:773.33px;font-size:29px;line-height:29px;color:#252423;left:1009.00px;transform-origin:0 0;transform:scaleX(0.935);">Dec 2022</div>
<div class="t" style="top:773.33px;font-size:29px;line-height:29px;color:#252423;left:-48.00px;width:1500px;text-align:right;transform-origin:100% 0;transform:scaleX(0.946);">$82,546.90</div>
<div class="t" style="top:773.33px;font-size:29px;line-height:29px;color:#252423;left:257.90px;width:1500px;text-align:right;transform-origin:100% 0;transform:scaleX(0.946);">($20,148.90)</div>
<div class="t" style="top:773.33px;font-size:29px;line-height:29px;color:#252423;left:442.50px;width:1500px;text-align:right;transform-origin:100% 0;transform:scaleX(0.946);">$1,576.96</div>
<div class="t" style="top:773.33px;font-size:29px;line-height:29px;color:#252423;left:714.90px;width:1500px;text-align:right;transform-origin:100% 0;transform:scaleX(0.946);">($99,974.13)</div>
<div class="t" style="top:773.33px;font-size:29px;line-height:29px;color:#252423;left:901.70px;width:1500px;text-align:right;transform-origin:100% 0;transform:scaleX(0.946);">($657.26)</div>
<div class="t" style="top:773.33px;font-size:29px;line-height:29px;color:#252423;left:1240.10px;width:1500px;text-align:right;transform-origin:100% 0;transform:scaleX(0.946);">$57,544.98</div>
<div class="t" style="top:773.33px;font-size:29px;line-height:29px;color:#252423;font-weight:700;left:1431.00px;width:1500px;text-align:right;transform-origin:100% 0;transform:scaleX(1.01);">$20,888.55</div>
<svg class="r" style="left:936px;top:822.47px" width="25" height="25"><rect x="1" y="1" width="23" height="23" fill="#fff" stroke="#5a5a5a" stroke-width="2.2"/><rect x="6" y="11" width="13" height="2.6" fill="#5a5a5a"/></svg>
<div class="t" style="top:816.42px;font-size:29px;line-height:29px;color:#000;font-weight:700;left:984.50px;transform-origin:0 0;transform:scaleX(1.007);">Y 2021</div>
<div class="t" style="top:816.42px;font-size:29px;line-height:29px;color:#000;font-weight:700;left:-48.00px;width:1500px;text-align:right;transform-origin:100% 0;transform:scaleX(1.02);">$12,105.00</div>
<div class="t" style="top:816.42px;font-size:29px;line-height:29px;color:#000;font-weight:700;left:257.90px;width:1500px;text-align:right;transform-origin:100% 0;transform:scaleX(1.02);">$154,112.95</div>
<div class="t" style="top:816.42px;font-size:29px;line-height:29px;color:#000;font-weight:700;left:442.50px;width:1500px;text-align:right;transform-origin:100% 0;transform:scaleX(1.02);">$62,199.77</div>
<div class="t" style="top:816.42px;font-size:29px;line-height:29px;color:#000;font-weight:700;left:714.90px;width:1500px;text-align:right;transform-origin:100% 0;transform:scaleX(1.02);">($3,010.70)</div>
<div class="t" style="top:816.42px;font-size:29px;line-height:29px;color:#000;font-weight:700;left:1240.10px;width:1500px;text-align:right;transform-origin:100% 0;transform:scaleX(1.02);">($62,590.27)</div>
<div class="t" style="top:816.42px;font-size:29px;line-height:29px;color:#252423;font-weight:700;left:1431.00px;width:1500px;text-align:right;transform-origin:100% 0;transform:scaleX(1.01);">$162,816.75</div>
<div class="t" style="top:859.51px;font-size:29px;line-height:29px;color:#252423;left:1009.00px;transform-origin:0 0;transform:scaleX(0.935);">Dec 2021</div>
<div class="t" style="top:859.51px;font-size:29px;line-height:29px;color:#252423;left:-48.00px;width:1500px;text-align:right;transform-origin:100% 0;transform:scaleX(0.946);">$12,105.00</div>
<div class="t" style="top:859.51px;font-size:29px;line-height:29px;color:#252423;left:257.90px;width:1500px;text-align:right;transform-origin:100% 0;transform:scaleX(0.946);">$154,112.95</div>
<div class="t" style="top:859.51px;font-size:29px;line-height:29px;color:#252423;left:442.50px;width:1500px;text-align:right;transform-origin:100% 0;transform:scaleX(0.946);">$62,199.77</div>
<div class="t" style="top:859.51px;font-size:29px;line-height:29px;color:#252423;left:714.90px;width:1500px;text-align:right;transform-origin:100% 0;transform:scaleX(0.946);">($3,010.70)</div>
<div class="t" style="top:859.51px;font-size:29px;line-height:29px;color:#252423;left:1240.10px;width:1500px;text-align:right;transform-origin:100% 0;transform:scaleX(0.946);">($62,590.27)</div>
<div class="t" style="top:859.51px;font-size:29px;line-height:29px;color:#252423;font-weight:700;left:1431.00px;width:1500px;text-align:right;transform-origin:100% 0;transform:scaleX(1.01);">$162,816.75</div>
<div class="t" style="top:902.60px;font-size:29px;line-height:29px;color:#252423;font-weight:700;left:984.50px;transform-origin:0 0;transform:scaleX(1.007);">Total</div>
<div class="t" style="top:902.60px;font-size:29px;line-height:29px;color:#252423;font-weight:700;left:-48.00px;width:1500px;text-align:right;transform-origin:100% 0;transform:scaleX(1.02);">$94,651.90</div>
<div class="t" style="top:902.60px;font-size:29px;line-height:29px;color:#252423;font-weight:700;left:257.90px;width:1500px;text-align:right;transform-origin:100% 0;transform:scaleX(1.02);">$133,964.05</div>
<div class="t" style="top:902.60px;font-size:29px;line-height:29px;color:#252423;font-weight:700;left:442.50px;width:1500px;text-align:right;transform-origin:100% 0;transform:scaleX(1.02);">$63,776.73</div>
<div class="t" style="top:902.60px;font-size:29px;line-height:29px;color:#252423;font-weight:700;left:714.90px;width:1500px;text-align:right;transform-origin:100% 0;transform:scaleX(1.02);">($102,984.83)</div>
<div class="t" style="top:902.60px;font-size:29px;line-height:29px;color:#252423;font-weight:700;left:901.70px;width:1500px;text-align:right;transform-origin:100% 0;transform:scaleX(1.02);">($657.26)</div>
<div class="t" style="top:902.60px;font-size:29px;line-height:29px;color:#252423;font-weight:700;left:1240.10px;width:1500px;text-align:right;transform-origin:100% 0;transform:scaleX(1.02);">($5,045.29)</div>
<div class="t" style="top:902.60px;font-size:29px;line-height:29px;color:#252423;font-weight:700;left:1431.00px;width:1500px;text-align:right;transform-origin:100% 0;transform:scaleX(1.01);">$183,705.30</div>
</body></html>
